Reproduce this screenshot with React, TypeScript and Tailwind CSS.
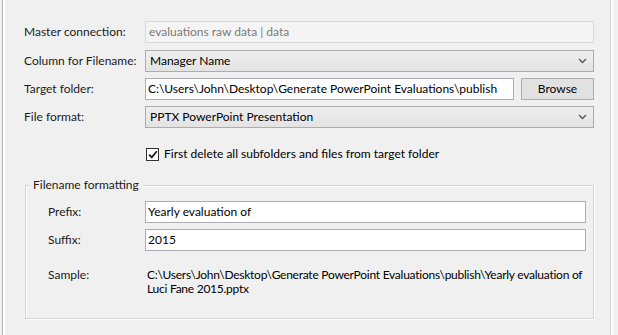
import React from "react";

const Chevron = () => (
  <svg width="9" height="6" viewBox="0 0 9 6" className="shrink-0">
    <path d="M1 1 L4.5 4.5 L8 1" fill="none" stroke="#5a5a5a" strokeWidth="1.4" />
  </svg>
);

const Label = ({ children, w = "w-[121px]" }: { children: React.ReactNode; w?: string }) => (
  <div className={`${w} shrink-0 text-[#1b1b1b] whitespace-nowrap`}>{children}</div>
);

export default function App() {
  return (
    <div
      className="w-[618px] h-[335px] bg-[#f0f0f0] text-[12px] leading-[14px] overflow-hidden flex whitespace-nowrap"
      style={{ fontFamily: 'Lato, "Liberation Sans", sans-serif' }}
    >
      <div className="w-[2px] shrink-0" />
      <div className="w-[1px] shrink-0 bg-[#b4b4b4]" />
      <div className="w-[2px] shrink-0 bg-white" />
      <div className="flex-1 min-w-0 flex flex-col pl-[19px] pr-[16px] pt-[21px]">
        <div className="flex items-center h-[22px]">
          <Label>Master connection:</Label>
          <div className="flex-1 min-w-0 h-[22px] border border-[#d9d9d9] bg-[#f4f4f4] text-[#7a7a7a] px-[3px] flex items-center">
            evaluations raw data | data
          </div>
        </div>
        <div className="flex items-center h-[22px] mt-[7px]">
          <Label>Column for Filename:</Label>
          <div className="flex-1 min-w-0 h-[22px] border border-[#adadad] bg-gradient-to-b from-[#efefef] to-[#e3e3e3] px-[4px] pr-[6px] flex items-center justify-between">
            <span>Manager Name</span>
            <Chevron />
          </div>
        </div>
        <div className="flex items-center h-[22px] mt-[6px]">
          <Label>Target folder:</Label>
          <div className="flex-1 min-w-0 h-[22px] border border-[#abadb3] bg-white px-[2px] flex items-center overflow-hidden">
            C:\Users\John\Desktop\Generate PowerPoint Evaluations\publish
          </div>
          <div className="w-[73px] shrink-0 ml-[7px] h-[22px] border border-[#adadad] bg-[#e1e1e1] flex items-center justify-center">
            Browse
          </div>
        </div>
        <div className="flex items-center h-[22px] mt-[6px]">
          <Label>File format:</Label>
          <div className="flex-1 min-w-0 h-[22px] border border-[#adadad] bg-gradient-to-b from-[#efefef] to-[#e3e3e3] px-[4px] pr-[6px] flex items-center justify-between">
            <span>PPTX PowerPoint Presentation</span>
            <Chevron />
          </div>
        </div>
        <div className="flex items-center mt-[19px] pl-[122px]">
          <div className="w-[13px] h-[13px] border border-[#333] bg-white flex items-center justify-center shrink-0">
            <svg width="10" height="9" viewBox="0 0 10 9">
              <path d="M1.2 4.6 L3.8 7.3 L8.8 1.2" fill="none" stroke="#1a1a1a" strokeWidth="1.8" />
            </svg>
          </div>
          <span className="ml-[5px]">First delete all subfolders and files from target folder</span>
        </div>
        <div className="relative min-w-0 mt-[24px] ml-[1px] h-[134px] border border-[#d5d5d5] shadow-[inset_1px_1px_0_#ffffff,1px_1px_0_#ffffff] flex flex-col pl-[22px] pr-[7px] pt-[15px]">
          <div className="absolute left-[3px] top-[-8px] bg-[#f0f0f0] px-[4px] text-[#1b1b1b]">
            Filename formatting
          </div>
          <div className="flex items-center h-[22px]">
            <Label w="w-[97px]">Prefix:</Label>
            <div className="flex-1 min-w-0 h-[22px] border border-[#abadb3] bg-white px-[2px] flex items-center">
              Yearly evaluation of
            </div>
          </div>
          <div className="flex items-center h-[22px] mt-[6px]">
            <Label w="w-[97px]">Suffix:</Label>
            <div className="flex-1 min-w-0 h-[22px] border border-[#abadb3] bg-white px-[2px] flex items-center">
              2015
            </div>
          </div>
          <div className="flex min-w-0 mt-[17px]">
            <Label w="w-[99px]">Sample:</Label>
            <div className="leading-[14px] min-w-0 tracking-[-0.25px]">
              C:\Users\John\Desktop\Generate PowerPoint Evaluations\publish\Yearly evaluation of
              <br />
              Luci Fane 2015.pptx
            </div>
          </div>
        </div>
      </div>
      <div className="w-[1px] shrink-0 bg-[#d4d4d4]" />
      <div className="w-[2px] shrink-0 bg-white" />
      <div className="w-[5px] shrink-0" />
    </div>
  );
}
